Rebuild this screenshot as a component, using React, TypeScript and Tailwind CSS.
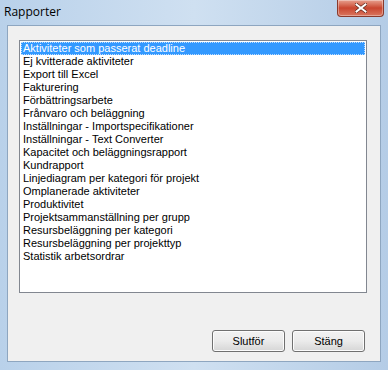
const reports = [
  "Aktiviteter som passerat deadline",
  "Ej kvitterade aktiviteter",
  "Export till Excel",
  "Fakturering",
  "Förbättringsarbete",
  "Frånvaro och beläggning",
  "Inställningar - Importspecifikationer",
  "Inställningar - Text Converter",
  "Kapacitet och beläggningsrapport",
  "Kundrapport",
  "Linjediagram per kategori för projekt",
  "Omplanerade aktiviteter",
  "Produktivitet",
  "Projektsammanställning per grupp",
  "Resursbeläggning per kategori",
  "Resursbeläggning per projekttyp",
  "Statistik arbetsordrar",
];

function WinButton({ label }: { label: string }) {
  return (
    <button className="h-[22px] w-[73px] rounded-[3px] border border-[#707070] bg-gradient-to-b from-[#f2f2f2] via-[#ebebeb] to-[#d6d6d6] text-[11px] text-black shadow-[inset_0_0_0_1px_#fcfcfc]">
      {label}
    </button>
  );
}

export default function App() {
  return (
    <div className="flex h-[370px] w-[388px] flex-col bg-gradient-to-r from-[#b9d1ea] via-[#cfe0f1] to-[#b4cce6] font-['Liberation_Sans',Arial,sans-serif]">
      <div className="flex h-[25px] items-start justify-between">
        <span className="pl-[4px] pt-[5px] font-['Open_Sans',sans-serif] text-[12px] leading-[14px] text-black">
          Rapporter
        </span>
        <div className="mr-[4px] flex h-[17px] w-[47px] items-center justify-center rounded-b-[4px] border border-t-0 border-[#8a3a2c] bg-gradient-to-b from-[#e6a08f] via-[#c9452f] to-[#d9765f] shadow-[inset_0_0_0_1px_rgba(255,255,255,0.35)]">
          <svg width="12" height="10" viewBox="0 0 12 10">
            <path d="M1.5 1.5 L10.5 8.5 M10.5 1.5 L1.5 8.5" stroke="#5a2418" strokeWidth="3.4" strokeLinecap="square" />
            <path d="M1.5 1.5 L10.5 8.5 M10.5 1.5 L1.5 8.5" stroke="#ffffff" strokeWidth="2" strokeLinecap="square" />
          </svg>
        </div>
      </div>
      <div className="mx-[7px] mb-[8px] flex flex-1 flex-col border border-[#8ea6c0] bg-[#f0f0f0]">
        <div className="ml-[11px] mr-[13px] mt-[14px] h-[253px] border border-[#828790] bg-white p-[1px]">
          {reports.map((r, i) => (
            <div
              key={r}
              className={
                i === 0
                  ? "h-[13px] border border-dotted border-[#bcdcff] bg-[#3399ff] pl-[1px] text-[11px] leading-[11px] text-white"
                  : "h-[13px] pl-[2px] text-[11px] leading-[13px] text-black"
              }
            >
              {r}
            </div>
          ))}
        </div>
        <div className="mr-[15px] mt-auto mb-[9px] flex justify-end gap-[7px]">
          <WinButton label="Slutför" />
          <WinButton label="Stäng" />
        </div>
      </div>
    </div>
  );
}
